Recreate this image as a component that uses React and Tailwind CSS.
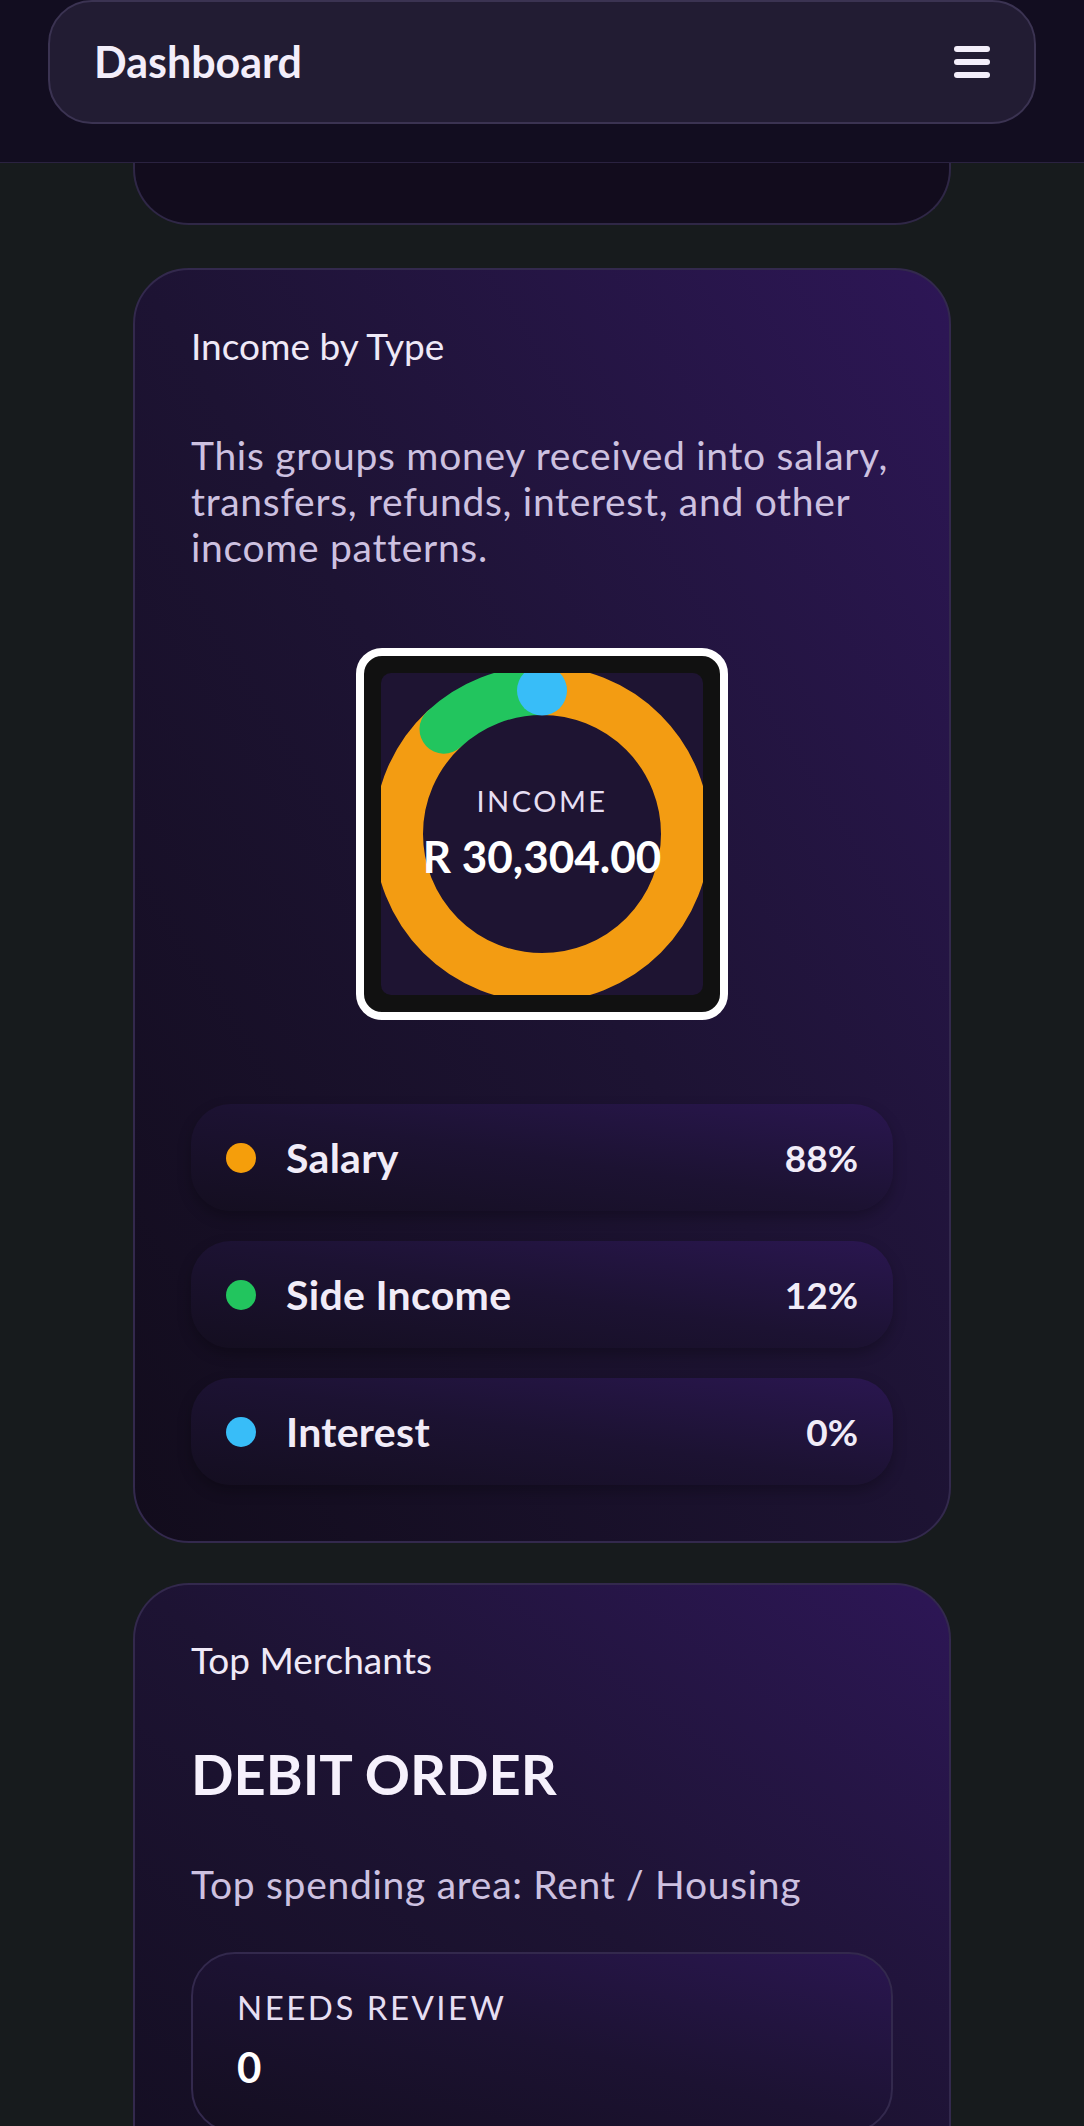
import React from 'react';

const legend = [
  { label: 'Salary', pct: '88%', dot: 'bg-[#f59e0b]' },
  { label: 'Side Income', pct: '12%', dot: 'bg-[#22c55e]' },
  { label: 'Interest', pct: '0%', dot: 'bg-[#38bdf8]' },
];

function Donut() {
  const r = 143.5;
  const c = 2 * Math.PI * r;
  const salary = c * 0.88;
  const side = c * 0.12;
  return (
    <div className="mx-auto w-[372px] rounded-[26px] border-[8px] border-white bg-[#111111] p-[17px]">
      <div className="relative h-[322px] w-full overflow-hidden rounded-[10px] bg-[#1e1432]">
        <svg width="322" height="322" viewBox="0 0 320 322" className="absolute left-0 top-0">
          <g transform="rotate(-90 160 161)">
            <circle cx="160" cy="161" r={r} fill="none" stroke="#f39c12" strokeWidth="49"
              strokeDasharray={`${salary} ${c}`} strokeLinecap="round" />
            <circle cx="160" cy="161" r={r} fill="none" stroke="#22c55e" strokeWidth="49"
              strokeDasharray={`${side} ${c}`} strokeDashoffset={-salary} strokeLinecap="round" />
          </g>
          <circle cx="160" cy="17.5" r="25" fill="#38bdf8" />
        </svg>
        <div className="absolute inset-0 flex flex-col items-center justify-center">
          <span className="mt-[-4px] text-[29px] leading-[34px] tracking-[2.5px] text-[#e6def2]">INCOME</span>
          <span className="mt-[14px] text-[44px] font-bold leading-[48px] text-white">R 30,304.00</span>
        </div>
      </div>
    </div>
  );
}

export default function App() {
  return (
    <div className="min-h-[2126px] bg-[#171b1d] font-['Lato','Open_Sans',sans-serif] text-[#ece6f5]">
      {/* top bar */}
      <header className="border-b border-[#2a2240] bg-[#120d20] px-[48px] pb-[38px]">
        <div className="flex h-[124px] items-center justify-between rounded-[44px] border-2 border-[#3b3352] bg-[#221c33] px-[44px]">
          <h1 className="text-[43px] font-bold text-[#f3eefa]">Dashboard</h1>
          <div className="flex w-[36px] flex-col gap-[7px]">
            <span className="h-[6px] rounded-full bg-[#f3eefa]" />
            <span className="h-[6px] rounded-full bg-[#f3eefa]" />
            <span className="h-[6px] rounded-full bg-[#f3eefa]" />
          </div>
        </div>
      </header>

      <main className="mx-auto flex w-[818px] flex-col">
        {/* tail of previous card */}
        <div className="h-[62px] rounded-b-[56px] border-x-2 border-b-2 border-[#2f2746] bg-[#120c1d]" />

        {/* Income by Type */}
        <section className="mt-[43px] rounded-[56px] border-2 border-[#33294d] bg-linear-to-bl from-[#2d1656] via-[#1d1333] to-[#120c1c] px-[56px] pb-[56px] pt-[54px]">
          <h2 className="text-[37px] leading-[44px] text-[#efe9f7]">Income by Type</h2>
          <p className="mt-[64px] text-[39px] leading-[46px] tracking-[0.7px] text-[#cdc1e0]">
            This groups money received into salary, transfers, refunds, interest, and other income patterns.
          </p>
          <div className="mt-[78px]">
            <Donut />
          </div>
          <div className="mt-[84px] flex flex-col gap-[30px]">
            {legend.map((item) => (
              <div key={item.label}
                className="flex h-[107px] items-center rounded-[40px] bg-linear-to-bl from-[#2a1650] via-[#1c1232] to-[#140e20] px-[35px] shadow-[0_6px_14px_rgba(0,0,0,0.25)]">
                <span className={`h-[30px] w-[30px] rounded-full ${item.dot}`} />
                <span className="ml-[30px] flex-1 text-[41px] font-bold tracking-[0.3px] text-[#f1ecf8]">{item.label}</span>
                <span className="text-[37px] font-bold text-[#f1ecf8]">{item.pct}</span>
              </div>
            ))}
          </div>
        </section>

        {/* Top Merchants */}
        <section className="mt-[40px] rounded-t-[56px] border-x-2 border-t-2 border-[#33294d] bg-linear-to-bl from-[#2d1656] via-[#1d1333] to-[#140e22] px-[56px] pt-[53px] pb-[40px]">
          <h2 className="text-[37px] leading-[44px] text-[#efe9f7]">Top Merchants</h2>
          <div className="mt-[60px] text-[56px] font-bold leading-[64px] text-[#f6f1fc]">DEBIT ORDER</div>
          <p className="mt-[56px] text-[39px] leading-[45px] tracking-[0.7px] text-[#cdc1e0]">Top spending area: Rent / Housing</p>
          <div className="mt-[45px] rounded-[44px] border-2 border-[#33294d] bg-linear-to-bl from-[#2a1650] via-[#1c1232] to-[#140e20] px-[44px] pb-[40px] pt-[33px]">
            <div className="text-[33px] leading-[40px] tracking-[2.5px] text-[#e6def2]">NEEDS REVIEW</div>
            <div className="mt-[16px] text-[42px] font-bold leading-[48px] text-white">0</div>
          </div>
        </section>
      </main>
    </div>
  );
}
